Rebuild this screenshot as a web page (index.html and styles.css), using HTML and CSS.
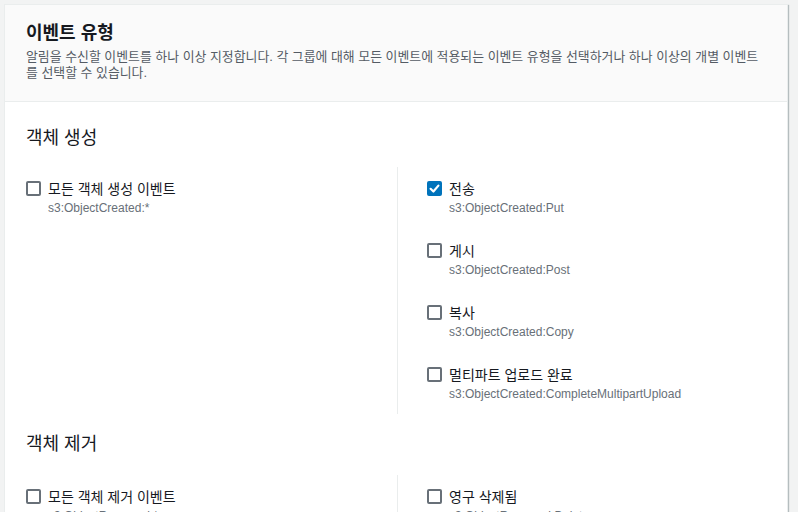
FILE: index.html
```html
<!DOCTYPE html>
<html lang="ko">
<head>
<meta charset="utf-8">
<link rel="stylesheet" href="styles.css">
</head>
<body>
<div class="card">
  <div class="card-header">
    <h2 class="title">이벤트 유형</h2>
    <p class="desc">알림을 수신할 이벤트를 하나 이상 지정합니다. 각 그룹에 대해 모든 이벤트에 적용되는 이벤트 유형을 선택하거나 하나 이상의 개별 이벤트를 선택할 수 있습니다.</p>
  </div>
  <div class="card-body">
    <section class="group">
      <h3 class="group-title">객체 생성</h3>
      <div class="cols">
        <div class="col">
          <label class="item"><span class="box"></span><span class="text"><span class="label">모든 객체 생성 이벤트</span><span class="sub">s3:ObjectCreated:*</span></span></label>
        </div>
        <div class="col col-right">
          <label class="item"><span class="box checked"><svg viewBox="0 0 15 15" width="15" height="15"><path d="M3.6 7.8 L6.4 10.5 L11.4 4.6" fill="none" stroke="#fff" stroke-width="2.2" stroke-linecap="round" stroke-linejoin="round"/></svg></span><span class="text"><span class="label">전송</span><span class="sub">s3:ObjectCreated:Put</span></span></label>
          <label class="item"><span class="box"></span><span class="text"><span class="label">게시</span><span class="sub">s3:ObjectCreated:Post</span></span></label>
          <label class="item"><span class="box"></span><span class="text"><span class="label">복사</span><span class="sub">s3:ObjectCreated:Copy</span></span></label>
          <label class="item"><span class="box"></span><span class="text"><span class="label">멀티파트 업로드 완료</span><span class="sub">s3:ObjectCreated:CompleteMultipartUpload</span></span></label>
        </div>
      </div>
    </section>
    <section class="group">
      <h3 class="group-title">객체 제거</h3>
      <div class="cols">
        <div class="col">
          <label class="item"><span class="box"></span><span class="text"><span class="label">모든 객체 제거 이벤트</span><span class="sub">s3:ObjectRemoved:*</span></span></label>
        </div>
        <div class="col col-right">
          <label class="item"><span class="box"></span><span class="text"><span class="label">영구 삭제됨</span><span class="sub">s3:ObjectRemoved:Delete</span></span></label>
        </div>
      </div>
    </section>
  </div>
</div>
</body>
</html>
```

FILE: styles.css
```css
* { box-sizing: border-box; }
html, body { margin: 0; padding: 0; }
body {
  background: #f2f3f3;
  font-family: "Liberation Sans", "Noto Sans CJK KR", sans-serif;
  color: #16191f;
  padding: 4px 10px 0 4px;
  overflow: hidden;
  height: 512px;
}
.card {
  background: #ffffff;
  border: 1px solid #eaeded;
  box-shadow: 1px 1px 1px 0 rgba(0, 28, 36, 0.25);
}
.card-header {
  background: #fafafa;
  border-bottom: 1px solid #eaeded;
  padding: 16px 20px 20px 21px;
}
.title {
  margin: 0;
  font-size: 18px;
  line-height: 24px;
  font-weight: 700;
  color: #16191f;
}
.desc {
  margin: 4px 0 0;
  font-size: 12.9px;
  line-height: 16px;
  color: #545b64;
}
.card-body {
  padding: 24px 20px 0 21px;
}
.group + .group { margin-top: 18px; }
.group-title {
  margin: 0 0 17px;
  font-size: 18px;
  line-height: 24px;
  font-weight: 400;
  color: #16191f;
}
.group + .group .group-title { margin-bottom: 19px; }
.cols {
  display: grid;
  grid-template-columns: 371px 1fr;
}
.col {
  display: flex;
  flex-direction: column;
  gap: 24px;
  padding: 12px 0 11px;
}
.col-right {
  border-left: 1px solid #eaeded;
  padding-left: 29px;
}
.item {
  display: flex;
  align-items: flex-start;
  gap: 7px;
}
.box {
  width: 15px;
  height: 15px;
  margin-top: 2px;
  border: 2px solid #687078;
  border-radius: 2px;
  flex: none;
  display: flex;
  align-items: center;
  justify-content: center;
  background: #fff;
}
.box.checked {
  background: #0073bb;
  border-color: #0073bb;
}
.box svg { flex: none; margin: -2px; }
.text { display: flex; flex-direction: column; }
.label {
  font-size: 14px;
  line-height: 20px;
  color: #16191f;
}
.sub {
  font-size: 12px;
  line-height: 18px;
  color: #687078;
}
```
